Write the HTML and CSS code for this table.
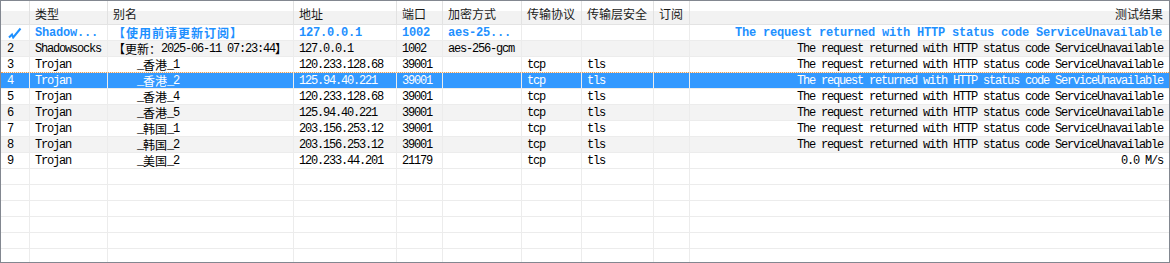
FILE: index.html
```html
<!DOCTYPE html>
<html lang="zh-CN">
<head>
<meta charset="utf-8">
<title>服务器列表</title>
<link rel="stylesheet" href="styles.css">
</head>
<body>
<div class="list">
  <div class="row head">
    <div class="c"></div>
    <div class="c">类型</div>
    <div class="c">别名</div>
    <div class="c">地址</div>
    <div class="c">端口</div>
    <div class="c">加密方式</div>
    <div class="c">传输协议</div>
    <div class="c">传输层安全</div>
    <div class="c">订阅</div>
    <div class="c r">测试结果</div>
  </div>

  <div class="row active">
    <div class="c idx"><svg class="check" width="14" height="12" viewBox="0 0 14 12"><polyline points="1,10.5 4,7.5 5.2,10.5 12.5,1.5" fill="none" stroke="#1e90ff" stroke-width="2" stroke-linejoin="miter"/></svg></div>
    <div class="c">Shadow...</div>
    <div class="c"><span class="zh">【使用前请更新订阅】</span></div>
    <div class="c">127.0.0.1</div>
    <div class="c">1002</div>
    <div class="c">aes-25...</div>
    <div class="c"></div>
    <div class="c"></div>
    <div class="c"></div>
    <div class="c r">The request returned with HTTP status code ServiceUnavailable</div>
  </div>

  <div class="row alt">
    <div class="c idx">2</div>
    <div class="c">Shadowsocks</div>
    <div class="c"><span class="zh">【更新：</span>2025-06-11 07:23:44<span class="zh">】</span></div>
    <div class="c">127.0.0.1</div>
    <div class="c">1002</div>
    <div class="c">aes-256-gcm</div>
    <div class="c"></div>
    <div class="c"></div>
    <div class="c"></div>
    <div class="c r">The request returned with HTTP status code ServiceUnavailable</div>
  </div>

  <div class="row">
    <div class="c idx">3</div>
    <div class="c">Trojan</div>
    <div class="c"><span class="flag"></span>_<span class="zh">香港</span>_1</div>
    <div class="c">120.233.128.68</div>
    <div class="c">39001</div>
    <div class="c"></div>
    <div class="c">tcp</div>
    <div class="c">tls</div>
    <div class="c"></div>
    <div class="c r">The request returned with HTTP status code ServiceUnavailable</div>
  </div>

  <div class="row selected">
    <div class="c idx">4</div>
    <div class="c">Trojan</div>
    <div class="c"><span class="flag"></span>_<span class="zh">香港</span>_2</div>
    <div class="c">125.94.40.221</div>
    <div class="c">39001</div>
    <div class="c"></div>
    <div class="c">tcp</div>
    <div class="c">tls</div>
    <div class="c"></div>
    <div class="c r">The request returned with HTTP status code ServiceUnavailable</div>
  </div>

  <div class="row">
    <div class="c idx">5</div>
    <div class="c">Trojan</div>
    <div class="c"><span class="flag"></span>_<span class="zh">香港</span>_4</div>
    <div class="c">120.233.128.68</div>
    <div class="c">39001</div>
    <div class="c"></div>
    <div class="c">tcp</div>
    <div class="c">tls</div>
    <div class="c"></div>
    <div class="c r">The request returned with HTTP status code ServiceUnavailable</div>
  </div>

  <div class="row alt">
    <div class="c idx">6</div>
    <div class="c">Trojan</div>
    <div class="c"><span class="flag"></span>_<span class="zh">香港</span>_5</div>
    <div class="c">125.94.40.221</div>
    <div class="c">39001</div>
    <div class="c"></div>
    <div class="c">tcp</div>
    <div class="c">tls</div>
    <div class="c"></div>
    <div class="c r">The request returned with HTTP status code ServiceUnavailable</div>
  </div>

  <div class="row">
    <div class="c idx">7</div>
    <div class="c">Trojan</div>
    <div class="c"><span class="flag"></span>_<span class="zh">韩国</span>_1</div>
    <div class="c">203.156.253.12</div>
    <div class="c">39001</div>
    <div class="c"></div>
    <div class="c">tcp</div>
    <div class="c">tls</div>
    <div class="c"></div>
    <div class="c r">The request returned with HTTP status code ServiceUnavailable</div>
  </div>

  <div class="row alt">
    <div class="c idx">8</div>
    <div class="c">Trojan</div>
    <div class="c"><span class="flag"></span>_<span class="zh">韩国</span>_2</div>
    <div class="c">203.156.253.12</div>
    <div class="c">39001</div>
    <div class="c"></div>
    <div class="c">tcp</div>
    <div class="c">tls</div>
    <div class="c"></div>
    <div class="c r">The request returned with HTTP status code ServiceUnavailable</div>
  </div>

  <div class="row">
    <div class="c idx">9</div>
    <div class="c">Trojan</div>
    <div class="c"><span class="flag"></span>_<span class="zh">美国</span>_2</div>
    <div class="c">120.233.44.201</div>
    <div class="c">21179</div>
    <div class="c"></div>
    <div class="c">tcp</div>
    <div class="c">tls</div>
    <div class="c"></div>
    <div class="c r">0.0 M/s</div>
  </div>

  <div class="row empty"><div class="c"></div><div class="c"></div><div class="c"></div><div class="c"></div><div class="c"></div><div class="c"></div><div class="c"></div><div class="c"></div><div class="c"></div><div class="c"></div></div>
  <div class="row empty"><div class="c"></div><div class="c"></div><div class="c"></div><div class="c"></div><div class="c"></div><div class="c"></div><div class="c"></div><div class="c"></div><div class="c"></div><div class="c"></div></div>
  <div class="row empty"><div class="c"></div><div class="c"></div><div class="c"></div><div class="c"></div><div class="c"></div><div class="c"></div><div class="c"></div><div class="c"></div><div class="c"></div><div class="c"></div></div>
  <div class="row empty"><div class="c"></div><div class="c"></div><div class="c"></div><div class="c"></div><div class="c"></div><div class="c"></div><div class="c"></div><div class="c"></div><div class="c"></div><div class="c"></div></div>
  <div class="row empty"><div class="c"></div><div class="c"></div><div class="c"></div><div class="c"></div><div class="c"></div><div class="c"></div><div class="c"></div><div class="c"></div><div class="c"></div><div class="c"></div></div>
  <div class="row empty"><div class="c"></div><div class="c"></div><div class="c"></div><div class="c"></div><div class="c"></div><div class="c"></div><div class="c"></div><div class="c"></div><div class="c"></div><div class="c"></div></div>
</div>
</body>
</html>
```

FILE: styles.css
```css
html, body {
  margin: 0;
  padding: 0;
  background: #ffffff;
}

.list {
  box-sizing: border-box;
  width: 1170px;
  height: 263px;
  border: 1px solid #828790;
  overflow: hidden;
  background: #ffffff;
  font-family: "Liberation Mono", "Noto Sans CJK SC", monospace;
  font-size: 12px;
  letter-spacing: -1.2px;
  color: #000000;
}

.row {
  display: grid;
  grid-template-columns: 29px 78px 186px 103px 46px 79px 60px 72px 36px 1fr;
  box-sizing: border-box;
  height: 16px;
  border-bottom: 1px solid #ececec;
}

.c {
  box-sizing: border-box;
  border-right: 1px solid #ececec;
  padding: 0 5px;
  height: 15px;
  line-height: 16px;
  white-space: nowrap;
  overflow: hidden;
}

.c:last-child {
  border-right: none;
}

.c.r {
  text-align: right;
  padding-right: 6px;
}

.c.idx {
  padding-left: 6px;
}

.zh {
  display: inline-block;
  vertical-align: top;
  height: 15px;
  line-height: 15px;
  font-family: "Noto Sans CJK SC", sans-serif;
  font-size: 12px;
  letter-spacing: 0;
}

.flag {
  display: inline-block;
  width: 24px;
}

/* header */
.row.head {
  height: 24px;
  border-bottom: 1px solid #e3e3e3;
  background: linear-gradient(#ffffff 0, #ffffff 42%, #f2f2f2 42%, #f2f2f2 100%);
  font-family: "Noto Sans CJK SC", sans-serif;
  font-size: 12px;
  letter-spacing: 0;
  color: #1a1a1a;
}

.row.head .c {
  height: 23px;
  border-right-color: #e2e2e2;
  line-height: 16px;
  padding-top: 5px;
}

/* zebra */
.row.alt {
  background: #f3f3f3;
}

/* active (in use) server */
.row.active {
  color: #1e90ff;
  font-weight: bold;
  letter-spacing: -0.2px;
}

.row.active .zh {
  letter-spacing: 1px;
  font-weight: bold;
}

.row.active .c.r {
  padding-right: 7px;
}

.check {
  display: block;
  margin: 2px 0 0 1px;
}

/* selected row */
.row.selected {
  background: #3399ff;
  color: #ffffff;
  position: relative;
}

.row.selected::before {
  content: "";
  position: absolute;
  left: 0;
  right: 0;
  top: -1px;
  border-top: 1px dotted #f0a050;
}

.row.empty {
  background: #ffffff;
}
```
